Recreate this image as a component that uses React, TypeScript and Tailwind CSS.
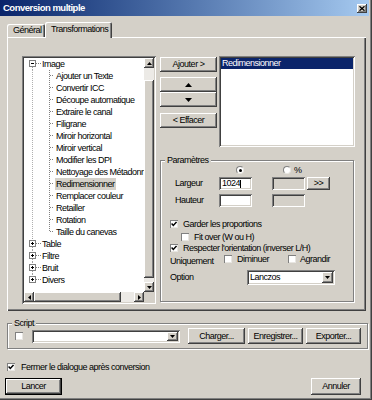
import React from "react";

const raised =
  "shadow-[inset_-1px_-1px_#404040,inset_1px_1px_#ffffff,inset_-2px_-2px_#808080,inset_2px_2px_#d4d0c8]";
const sunken =
  "shadow-[inset_1px_1px_#808080,inset_-1px_-1px_#ffffff,inset_2px_2px_#404040,inset_-2px_-2px_#d4d0c8]";

function Tri({ dir, size = 5 }: { dir: "up" | "down" | "left" | "right"; size?: number }) {
  const h = Math.ceil(size / 2);
  let pts = "";
  let w = size;
  let hh = h;
  if (dir === "up") pts = `0,${h} ${size},${h} ${size / 2},0`;
  if (dir === "down") pts = `0,0 ${size},0 ${size / 2},${h}`;
  if (dir === "left") {
    w = h;
    hh = size;
    pts = `${h},0 ${h},${size} 0,${size / 2}`;
  }
  if (dir === "right") {
    w = h;
    hh = size;
    pts = `0,0 0,${size} ${h},${size / 2}`;
  }
  return (
    <svg width={w} height={hh} viewBox={`0 0 ${w} ${hh}`}>
      <polygon points={pts} fill="#000" />
    </svg>
  );
}

function Check({ checked }: { checked?: boolean }) {
  return (
    <div className="w-[8px] h-[8px] shrink-0 bg-white shadow-[inset_1px_1px_#808080,inset_-1px_-1px_#e8e6e2] flex items-center justify-center">
      {checked && (
        <svg width="6" height="6" viewBox="0 0 6 6">
          <path d="M0.6 2.6 L2.3 4.4 L5.5 0.9" stroke="#000" strokeWidth="1.5" fill="none" />
        </svg>
      )}
    </div>
  );
}

function Radio({ on }: { on?: boolean }) {
  return (
    <div className="w-[8px] h-[8px] shrink-0 rounded-full bg-white border border-[#808080] border-r-[#e8e6e2] border-b-[#e8e6e2] flex items-center justify-center">
      {on && <div className="w-[3px] h-[3px] rounded-full bg-black" />}
    </div>
  );
}

function Btn({ className, children }: { className?: string; children?: React.ReactNode }) {
  return (
    <div className={`${raised} bg-[#d4d0c8] flex items-center justify-center shrink-0 ${className ?? ""}`}>
      {children}
    </div>
  );
}

function TopRow({ label, open, first, last }: { label: string; open?: boolean; first?: boolean; last?: boolean }) {
  return (
    <div className="flex h-[12px] items-center shrink-0">
      <svg width="18" height="12" viewBox="0 0 18 12" className="shrink-0">
        {!first && <line x1="8.5" y1="0" x2="8.5" y2="3" stroke="#a0a0a0" strokeDasharray="1 1" />}
        {!last && <line x1="8.5" y1="9" x2="8.5" y2="12" stroke="#a0a0a0" strokeDasharray="1 1" />}
        <line x1="12" y1="5.5" x2="17" y2="5.5" stroke="#808080" strokeDasharray="1 1" />
        <rect x="5.5" y="2.5" width="6" height="6" fill="#fff" stroke="#808080" />
        <line x1="7" y1="5.5" x2="10" y2="5.5" stroke="#000" />
        {!open && <line x1="8.5" y1="4" x2="8.5" y2="7" stroke="#000" />}
      </svg>
      <span className="whitespace-nowrap">{label}</span>
    </div>
  );
}

function ChildRow({ label, last, selected }: { label: string; last?: boolean; selected?: boolean }) {
  return (
    <div className="flex h-[12px] items-center shrink-0">
      <svg width="31" height="12" viewBox="0 0 31 12" className="shrink-0">
        <line x1="8.5" y1="0" x2="8.5" y2="12" stroke="#b0b0b0" strokeDasharray="1 1" />
        <line x1="25.5" y1="0" x2="25.5" y2={last ? 6 : 12} stroke="#808080" strokeDasharray="1 1" />
        <line x1="26" y1="5.5" x2="30" y2="5.5" stroke="#808080" strokeDasharray="1 1" />
      </svg>
      <span className={`whitespace-nowrap px-[1px] h-[12px] flex items-center ${selected ? "bg-[#d4d0c8]" : ""}`}>
        {label}
      </span>
    </div>
  );
}

function Tree() {
  const children = [
    "Ajouter un Texte",
    "Convertir ICC",
    "Découpe automatique",
    "Extraire le canal",
    "Filigrane",
    "Miroir horizontal",
    "Miroir vertical",
    "Modifier les DPI",
    "Nettoyage des Métadonnées",
    "Redimensionner",
    "Remplacer couleur",
    "Retailler",
    "Rotation",
    "Taille du canevas",
  ];
  return (
    <div className={`w-[134px] h-[248px] shrink-0 bg-white ${sunken} p-[2px] flex flex-col`}>
      <div className="flex flex-1 min-h-0">
        <div className="flex-1 overflow-hidden flex flex-col">
          <TopRow label="Image" open first />
          {children.map((c, i) => (
            <ChildRow key={c} label={c} last={i === children.length - 1} selected={c === "Redimensionner"} />
          ))}
          <TopRow label="Table" />
          <TopRow label="Filtre" />
          <TopRow label="Bruit" />
          <TopRow label="Divers" last />
        </div>
        <div className="w-[10px] flex flex-col bg-[#eceae6]">
          <Btn className="h-[10px] w-[10px]">
            <Tri dir="up" size={5} />
          </Btn>
          <div className="flex-1 flex flex-col">
            <Btn className="mt-[12px] h-[198px] w-[10px]" />
          </div>
          <Btn className="h-[10px] w-[10px]">
            <Tri dir="down" size={5} />
          </Btn>
        </div>
      </div>
      <div className="flex h-[10px]">
        <div className="flex-1 flex bg-[#eceae6]">
          <Btn className="h-[10px] w-[10px]">
            <Tri dir="left" size={5} />
          </Btn>
          <Btn className="h-[10px] w-[87px]" />
          <div className="flex-1" />
          <Btn className="h-[10px] w-[10px]">
            <Tri dir="right" size={5} />
          </Btn>
        </div>
        <div className="w-[10px] bg-[#d4d0c8]" />
      </div>
    </div>
  );
}

function Combo({ className, value }: { className?: string; value?: string }) {
  return (
    <div className={`bg-white ${sunken} p-[2px] flex items-center shrink-0 ${className ?? ""}`}>
      <div className="flex-1 pl-[1px] whitespace-nowrap">{value}</div>
      <Btn className="w-[11px] h-full">
        <Tri dir="down" size={5} />
      </Btn>
    </div>
  );
}

export default function App() {
  return (
    <div className="w-[372px] h-[400px] bg-[#d4d0c8] font-['Liberation_Sans',Arial,sans-serif] text-[9px] tracking-[-0.5px] text-black leading-none overflow-hidden flex flex-col shadow-[inset_-1px_-1px_#404040,inset_-2px_-2px_#808080]">
      {/* Title bar */}
      <div className="h-[16px] mr-[3px] flex items-center justify-between bg-linear-to-r from-[#0a246a] to-[#a6caf0] pl-[3px] pr-[2px] shrink-0">
        <span className="text-white font-bold text-[9.5px]">Conversion multiple</span>
        <Btn className="w-[10px] h-[9px]">
          <svg width="6" height="5" viewBox="0 0 6 5">
            <path d="M0.5 0.3 L5.5 4.7 M5.5 0.3 L0.5 4.7" stroke="#000" strokeWidth="1.3" />
          </svg>
        </Btn>
      </div>

      {/* Tabs */}
      <div className="flex items-end h-[15px] mt-[6px] ml-[7px] relative z-10 shrink-0">
        <div className="w-[38px] h-[13px] bg-[#d4d0c8] rounded-t-[2px] shadow-[inset_1px_1px_#ffffff,inset_-1px_0_#404040,inset_-2px_0_#808080] pl-[6px] flex items-center">
          Général
        </div>
        <div className="w-[67px] h-[16px] -mb-[1px] bg-[#d4d0c8] rounded-t-[2px] shadow-[inset_1px_1px_#ffffff,inset_-1px_0_#404040,inset_-2px_0_#808080] pl-[6px] pb-[2px] flex items-center">
          Transformations
        </div>
      </div>

      {/* Panel */}
      <div className="ml-[7px] w-[359px] h-[274px] shrink-0 shadow-[inset_1px_1px_#ffffff,inset_-1px_-1px_#404040,inset_-2px_-2px_#808080] pl-[15px] pt-[19px] flex">
        <Tree />
        <div className="ml-[4px] w-[195px] flex flex-col">
          <div className="flex h-[91px]">
            <div className="w-[57px] flex flex-col">
              <Btn className="mt-[1px] h-[15px] w-[57px]">{"Ajouter >"}</Btn>
              <Btn className="mt-[5px] h-[15px] w-[57px]">
                <Tri dir="up" size={7} />
              </Btn>
              <Btn className="h-[15px] w-[57px]">
                <Tri dir="down" size={7} />
              </Btn>
              <Btn className="mt-[6px] h-[15px] w-[57px]">{"< Effacer"}</Btn>
            </div>
            <div className={`ml-[2px] w-[136px] h-[91px] bg-white ${sunken} p-[2px]`}>
              <div className="h-[11px] bg-[#0a246a] text-white pl-[1px] flex items-center">Redimensionner</div>
            </div>
          </div>

          {/* Paramètres group */}
          <div className="relative mt-[13px] w-[194px] h-[142px] border border-[#808080] shadow-[inset_1px_1px_#ffffff,1px_1px_#ffffff] flex flex-col">
            <div className="absolute -top-[5px] left-[4px] px-[2px] bg-[#d4d0c8]">Paramètres</div>
            <div className="mt-[5px] h-[8px] flex items-center">
              <div className="ml-[75px]">
                <Radio on />
              </div>
              <div className="ml-[39px]">
                <Radio />
              </div>
              <span className="ml-[3px]">%</span>
            </div>
            <div className="mt-[3px] h-[13px] flex items-center">
              <span className="ml-[14px] w-[44px]">Largeur</span>
              <div className={`w-[33px] h-[13px] bg-white ${sunken} pl-[3px] flex items-center`}>
                1024<span className="w-[1px] h-[8px] bg-black" />
              </div>
              <div className={`ml-[20px] w-[33px] h-[13px] bg-[#d4d0c8] ${sunken}`} />
              <Btn className="ml-[2px] w-[23px] h-[13px]">{">>"}</Btn>
            </div>
            <div className="mt-[4px] h-[13px] flex items-center">
              <span className="ml-[14px] w-[44px]">Hauteur</span>
              <div className={`w-[33px] h-[13px] bg-white ${sunken}`} />
              <div className={`ml-[20px] w-[33px] h-[13px] bg-[#d4d0c8] ${sunken}`} />
            </div>
            <div className="mt-[13px] h-[8px] flex items-center">
              <div className="ml-[9px]">
                <Check checked />
              </div>
              <span className="ml-[5px]">Garder les proportions</span>
            </div>
            <div className="mt-[5px] h-[8px] flex items-center">
              <div className="ml-[20px]">
                <Check />
              </div>
              <span className="ml-[5px]">Fit over (W ou H)</span>
            </div>
            <div className="mt-[3px] h-[8px] flex items-center">
              <div className="ml-[9px]">
                <Check checked />
              </div>
              <span className="ml-[5px]">{"Respecter l'orientation (inverser L/H)"}</span>
            </div>
            <div className="mt-[3px] h-[8px] flex items-center">
              <span className="ml-[9px] w-[54px] pt-[4px]">Uniquement</span>
              <Check />
              <span className="ml-[5px] w-[51px] pt-[1px]">Diminuer</span>
              <Check />
              <span className="ml-[4px] pt-[1px]">Agrandir</span>
            </div>
            <div className="mt-[7px] h-[15px] flex items-center">
              <span className="ml-[9px] w-[77px]">Option</span>
              <Combo className="w-[88px] h-[15px]" value="Lanczos" />
            </div>
          </div>
        </div>
      </div>

      {/* Script group */}
      <div className="relative mt-[12px] ml-[7px] w-[361px] h-[26px] shrink-0 border border-[#808080] shadow-[inset_1px_1px_#ffffff,1px_1px_#ffffff] flex flex-col">
        <div className="absolute -top-[5px] left-[4px] px-[2px] bg-[#d4d0c8]">Script</div>
        <div className="mt-[4px] h-[16px] flex items-center">
          <div className="ml-[7px]">
            <Check />
          </div>
          <Combo className="ml-[9px] w-[148px] h-[13px]" />
          <Btn className="ml-[8px] w-[57px] h-[16px]">Charger...</Btn>
          <Btn className="ml-[3px] w-[55px] h-[16px]">Enregistrer...</Btn>
          <Btn className="ml-[3px] w-[55px] h-[16px]">Exporter...</Btn>
        </div>
      </div>

      {/* Close checkbox */}
      <div className="mt-[14px] h-[8px] flex items-center shrink-0">
        <div className="ml-[7px]">
          <Check checked />
        </div>
        <span className="ml-[6px]">Fermer le dialogue après conversion</span>
      </div>

      {/* Bottom buttons */}
      <div className="mt-[7px] h-[17px] flex justify-between shrink-0 ml-[5px] mr-[11px]">
        <div className="w-[57px] h-[17px] border border-black flex">
          <Btn className="flex-1 h-full">Lancer</Btn>
        </div>
        <Btn className="w-[50px] h-[17px]">Annuler</Btn>
      </div>
    </div>
  );
}
